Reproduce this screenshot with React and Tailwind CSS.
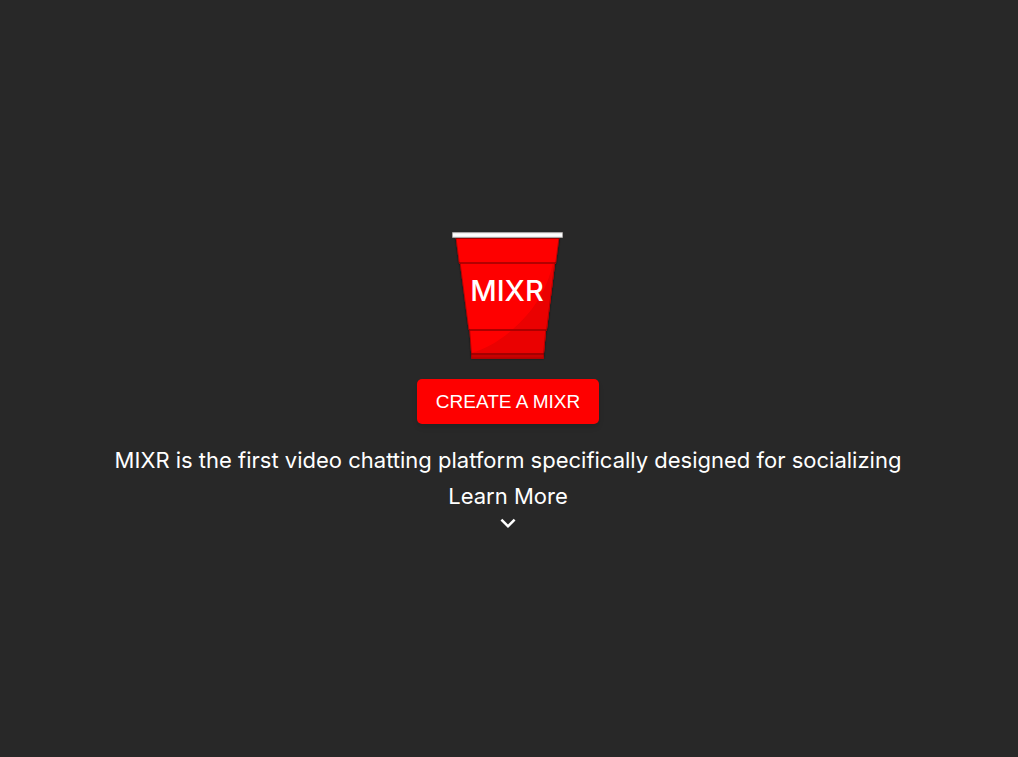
import React from 'react';
import { MdExpandMore } from 'react-icons/md';

const CupLogo = () => {
    return (
        <svg width="112" height="128" viewBox="0 0 112 128" role="img" aria-label="MIXR" className="block overflow-visible">
            <defs>
                <clipPath id="cup-body">
                    <path d="M3.5 4 H107.5 L104 31 L103 32 L95 97 L94 99 L91.5 126.5 H19.5 L17.5 99 L16.5 97 L8 32 L7 31 Z" />
                </clipPath>
                <filter id="cup-shadow" x="-10%" y="-10%" width="120%" height="120%">
                    <feDropShadow dx="0" dy="0" stdDeviation="1.2" floodColor="#000" floodOpacity="0.7" />
                </filter>
                <filter id="cup-soft" x="-10%" y="-300%" width="120%" height="700%">
                    <feGaussianBlur stdDeviation="0.6" />
                </filter>
            </defs>
            <g filter="url(#cup-shadow)">
                <path d="M3.5 4 H107.5 L104 31 L103 32 L95 97 L94 99 L91.5 126.5 H19.5 L17.5 99 L16.5 97 L8 32 L7 31 Z" fill="#fe0000" />
            </g>
            <g clipPath="url(#cup-body)">
                {/* shaded side */}
                <path d="M101 30 C96 57 81 80 60 98 C47 109 34 117 19 121 V128 H110 V30 Z" fill="#ea0101" />
                <rect x="0" y="5" width="112" height="2" fill="#a00000" filter="url(#cup-soft)" />
                {/* ridges */}
                <rect x="4" y="30" width="104" height="2" fill="#b40000" filter="url(#cup-soft)" />
                <rect x="14" y="97" width="84" height="2" fill="#ac0000" filter="url(#cup-soft)" />
                <rect x="18" y="122" width="76" height="5" fill="#c80000" />
                <rect x="18" y="121" width="76" height="2" fill="#a40000" filter="url(#cup-soft)" />
                {/* dark edges */}
                <path
                    d="M3.5 4 L7 31 L8 32 L16.5 97 L17.5 99 L19.5 126.5 H91.5 L94 99 L95 97 L103 32 L104 31 L107.5 4"
                    fill="none"
                    stroke="#700000"
                    strokeOpacity="0.5"
                    strokeWidth="1.5"
                />
            </g>
            <rect x="0" y="0" width="111" height="6" rx="1" fill="#a8a4a4" />
            <rect x="1" y="1" width="109" height="4" fill="#f0f0f0" />
            <rect x="1" y="2" width="109" height="2" fill="#fff" />
            <text x="55" y="69" textAnchor="middle" fill="#fff" className="font-['Inter'] text-[29px] font-medium">
                MIXR
            </text>
        </svg>
    );
};

const App = () => {
    return (
        <main className="min-h-screen bg-[#282828] pt-[13px] pr-0.5 flex flex-col items-center justify-center text-white font-['Inter',sans-serif]">
            <CupLogo />
            <button
                type="button"
                className="mt-[19px] h-[45px] px-[19px] pt-0.5 rounded-[5px] bg-[#fe0000] text-[19px] font-['Liberation_Sans',sans-serif] shadow-md hover:bg-red-700 cursor-pointer"
            >
                CREATE A MIXR
            </button>
            <p className="mt-6 text-[22px] leading-6 text-center">
                MIXR is the first video chatting platform specifically designed for socializing
            </p>
            <a href="#about" className="mt-3 flex flex-col items-center text-[22px] leading-6">
                Learn More
                <MdExpandMore className="size-[30px]" />
            </a>
        </main>
    );
};

export default App;
